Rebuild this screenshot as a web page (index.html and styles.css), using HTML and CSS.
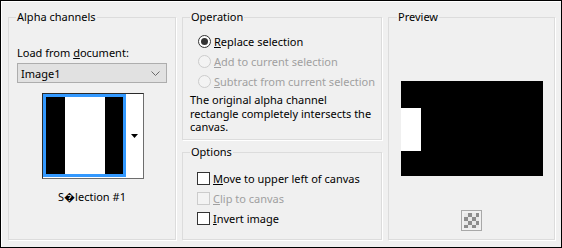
FILE: index.html
```html
<!DOCTYPE html>
<html lang="en">
<head>
  <meta charset="UTF-8" />
  <meta name="viewport" content="width=device-width, initial-scale=1.0" />
  <title>Load Selection From Alpha Channel</title>
  <link rel="stylesheet" href="styles.css">
</head>
<body>
  <div class="dialog">
    <fieldset class="group group-alpha">
      <legend>Alpha channels</legend>
      <div class="field-label">Load from <u>d</u>ocument:</div>
      <div class="select">
        <span>Image1</span>
        <svg class="chevron" width="9" height="5" viewBox="0 0 9 5"><path d="M0.5 0.5 L4.5 4.5 L8.5 0.5" fill="none" stroke="#6a6a6a" /></svg>
      </div>
      <div class="thumb">
        <div class="thumb-image">
          <span class="stripe black"></span>
          <span class="stripe white wide"></span>
          <span class="stripe black narrow"></span>
        </div>
        <div class="thumb-arrow">
          <svg width="7" height="4" viewBox="0 0 7 4"><polygon points="0,0 7,0 3.5,4" fill="#000" /></svg>
        </div>
      </div>
      <div class="caption">S&#xFFFD;lection #1</div>
    </fieldset>

    <div class="middle">
      <fieldset class="group group-operation">
        <legend>Operation</legend>
        <div class="option">
          <span class="radio checked"></span>
          <span><u>R</u>eplace selection</span>
        </div>
        <div class="option disabled">
          <span class="radio"></span>
          <span><u>A</u>dd to current selection</span>
        </div>
        <div class="option disabled">
          <span class="radio"></span>
          <span><u>S</u>ubtract from current selection</span>
        </div>
        <p class="note">The original alpha channel<br>rectangle completely intersects the<br>canvas.</p>
      </fieldset>

      <fieldset class="group group-options">
        <legend>Options</legend>
        <div class="option">
          <span class="check"></span>
          <span><u>M</u>ove to upper left of canvas</span>
        </div>
        <div class="option disabled">
          <span class="check"></span>
          <span><u>C</u>lip to canvas</span>
        </div>
        <div class="option">
          <span class="check"></span>
          <span><u>I</u>nvert image</span>
        </div>
      </fieldset>
    </div>

    <fieldset class="group group-preview">
      <legend>Preview</legend>
      <div class="preview">
        <div class="preview-mark"></div>
      </div>
      <div class="checker"><span></span></div>
    </fieldset>
  </div>
</body>
</html>
```

FILE: styles.css
```css
body {
  margin: 0;
  background: #ffffff;
  font-family: 'Noto Sans', sans-serif;
  font-size: 11px;
  color: #000000;
}

.dialog {
  box-sizing: border-box;
  width: 562px;
  height: 248px;
  border: 1px solid #000000;
  background: #f0f0f0;
  box-shadow: inset 1px 1px 0 #ffffff;
  padding: 8px 6px 7px 7px;
  display: flex;
  gap: 6px;
}

.group {
  box-sizing: border-box;
  margin: 0;
  min-width: 0;
  border: 1px solid #dcdcdc;
  box-shadow: 1px 1px 0 #ffffff;
  padding: 0 7px;
}

.group legend {
  padding: 0 1px;
  line-height: 16px;
}

.group-alpha {
  width: 168px;
  padding: 0 8px;
}

.group-alpha legend {
  margin-left: -1px;
}

.middle {
  width: 200px;
  display: flex;
  flex-direction: column;
  gap: 4px;
}

.group-operation {
  height: 131px;
}

.group-options {
  flex: 1;
}

.group-preview {
  width: 167px;
  padding: 0 8px;
}

/* alpha channels */
.field-label {
  margin-top: 20px;
  line-height: 16px;
}

.select {
  box-sizing: border-box;
  height: 20px;
  margin-top: 2px;
  border: 1px solid #adadad;
  background: #e1e1e1;
  padding: 0 6px 0 3px;
  display: flex;
  align-items: center;
  justify-content: space-between;
}

.thumb {
  box-sizing: border-box;
  width: 102px;
  height: 86px;
  margin: 10px 0 0 25px;
  border: 1px solid;
  border-color: #2a2a2a #6d6d6d #6d6d6d #2a2a2a;
  background: #ffffff;
  display: flex;
}

.thumb-image {
  box-sizing: border-box;
  width: 83px;
  height: 83px;
  border: 3px solid #3399ff;
  display: flex;
}

.stripe {
  width: 19px;
}

.stripe.black {
  background: #000000;
}

.stripe.white {
  background: #ffffff;
}

.stripe.wide {
  width: 40px;
}

.stripe.narrow {
  width: 18px;
}

.thumb-arrow {
  flex: 1;
  display: flex;
  align-items: center;
  justify-content: center;
}

.caption {
  margin-top: 10px;
  line-height: 16px;
  text-align: center;
}

/* radios and checkboxes */
.option {
  height: 20px;
  display: flex;
  align-items: center;
  gap: 3px;
  white-space: nowrap;
}

.group-operation .option {
  margin-left: 8px;
}

.group-operation .option:first-of-type {
  margin-top: 6px;
}

.group-options .option {
  margin-left: 7px;
}

.group-options .option:first-of-type {
  margin-top: 8px;
}

.option.disabled {
  color: #a0a0a0;
}

.radio {
  box-sizing: border-box;
  flex-shrink: 0;
  width: 13px;
  height: 13px;
  border: 1px solid #333333;
  border-radius: 50%;
  background: #ffffff;
  display: flex;
  align-items: center;
  justify-content: center;
}

.radio.checked::after {
  content: '';
  width: 7px;
  height: 7px;
  border-radius: 50%;
  background: #333333;
}

.disabled .radio {
  border-color: #cccccc;
  background: #f3f3f3;
}

.check {
  box-sizing: border-box;
  flex-shrink: 0;
  width: 13px;
  height: 13px;
  border: 1px solid #333333;
  background: #ffffff;
}

.disabled .check {
  border-color: #cccccc;
  background: #f3f3f3;
}

.note {
  margin: 2px 0 0;
  line-height: 13.5px;
  white-space: nowrap;
}

/* preview */
.preview {
  width: 142px;
  height: 95px;
  margin: 56px auto 0;
  padding-top: 27px;
  box-sizing: border-box;
  background: #000000;
}

.preview-mark {
  width: 20px;
  height: 43px;
  background: #ffffff;
}

.checker {
  box-sizing: border-box;
  width: 21px;
  height: 21px;
  margin: 34px auto 0;
  border: 1px solid #a8a8a8;
  padding: 2px;
}

.checker span {
  display: block;
  width: 15px;
  height: 15px;
  background: repeating-conic-gradient(#8c8c8c 0 25%, #e8e8e8 0 50%) 0 0 / 8px 8px;
}
```
